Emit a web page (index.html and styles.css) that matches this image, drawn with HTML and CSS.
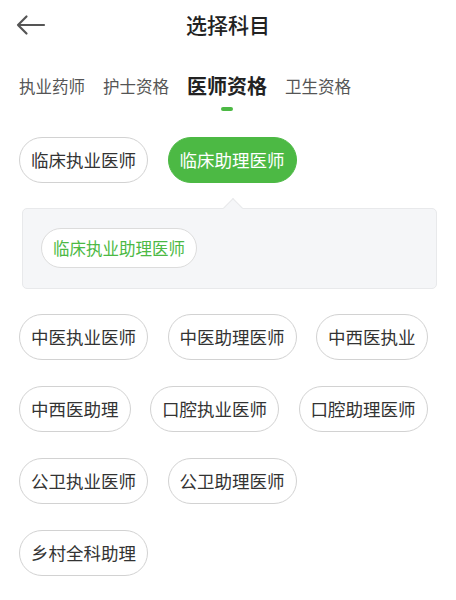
FILE: index.html
```html
<!DOCTYPE html>
<html lang="zh">
<head>
<meta charset="utf-8">
<title>选择科目</title>
<link rel="stylesheet" href="styles.css">
</head>
<body>
<div class="page">
  <header class="header">
    <div class="back">
      <svg width="30" height="22" viewBox="0 0 30 22"><path d="M2 11 H28 M10.5 2.5 L2 11 L10.5 19.5" fill="none" stroke="#555" stroke-width="2.2" stroke-linecap="round" stroke-linejoin="round"/></svg>
    </div>
    <h1 class="title">选择科目</h1>
    <div></div>
  </header>

  <nav class="tabs">
    <div class="tab">执业药师</div>
    <div class="tab">护士资格</div>
    <div class="tab active">医师资格<span class="indicator"></span></div>
    <div class="tab">卫生资格</div>
  </nav>

  <section class="tags">
    <div class="row">
      <span class="pill">临床执业医师</span>
      <span class="pill selected">临床助理医师</span>
    </div>
    <div class="popup">
      <span class="arrow"></span>
      <span class="pill sub">临床执业助理医师</span>
    </div>
    <div class="row wrap">
      <span class="pill">中医执业医师</span>
      <span class="pill">中医助理医师</span>
      <span class="pill">中西医执业</span>
      <span class="pill">中西医助理</span>
      <span class="pill">口腔执业医师</span>
      <span class="pill">口腔助理医师</span>
      <span class="pill">公卫执业医师</span>
      <span class="pill">公卫助理医师</span>
      <span class="pill">乡村全科助理</span>
    </div>
  </section>
</div>
</body>
</html>
```

FILE: styles.css
```css
* { box-sizing: border-box; }
html, body { margin: 0; padding: 0; background: #fff; }
body {
  font-family: "Noto Sans CJK SC", "Noto Sans", sans-serif;
  color: #333;
  width: 456px;
}
.header {
  height: 48px;
  display: grid;
  grid-template-columns: 60px 1fr 60px;
  align-items: center;
}
.back { padding-left: 16px; padding-top: 2px; display: flex; align-items: center; }
.title {
  margin: 0;
  text-align: center;
  font-size: 21px;
  font-weight: 500;
  color: #222;
  line-height: 30px;
}
.tabs {
  display: flex;
  align-items: flex-start;
  gap: 18px;
  padding-left: 19px;
  margin-top: 24px;
}
.tab {
  display: flex;
  flex-direction: column;
  align-items: center;
  font-size: 16.5px;
  line-height: 28px;
  color: #555;
}
.tab.active {
  font-size: 20px;
  font-weight: 700;
  color: #222;
}
.indicator {
  display: block;
  width: 12px;
  height: 4px;
  margin-top: 7px;
  border-radius: 2px;
  background: #4cb944;
}
.tags {
  margin-top: 26px;
  display: flex;
  flex-direction: column;
  gap: 25px;
}
.row {
  display: flex;
  gap: 19.5px;
  padding-left: 19px;
}
.row.wrap {
  flex-wrap: wrap;
  row-gap: 26px;
  padding-right: 19px;
}
.pill {
  height: 46px;
  padding: 0 11px;
  border: 1px solid #d2d2d2;
  border-radius: 23px;
  font-size: 17.5px;
  line-height: 44px;
  color: #333;
  white-space: nowrap;
  background: #fff;
}
.pill.selected {
  background: #4cb944;
  border-color: #4cb944;
  color: #fff;
}
.popup {
  position: relative;
  margin: 0 19px 0 22px;
  padding: 19px 18px 20px;
  background: #f5f6f8;
  border: 1px solid #e8e9eb;
  border-radius: 5px;
  display: flex;
}
.arrow {
  position: absolute;
  top: -8px;
  left: 203px;
  width: 14px;
  height: 14px;
  background: #f5f6f8;
  border-left: 1px solid #e8e9eb;
  border-top: 1px solid #e8e9eb;
  transform: rotate(45deg);
}
.pill.sub {
  height: 40px;
  border-radius: 20px;
  font-size: 16.5px;
  line-height: 38px;
  color: #4cb944;
  border-color: #dcdcdc;
}
```
